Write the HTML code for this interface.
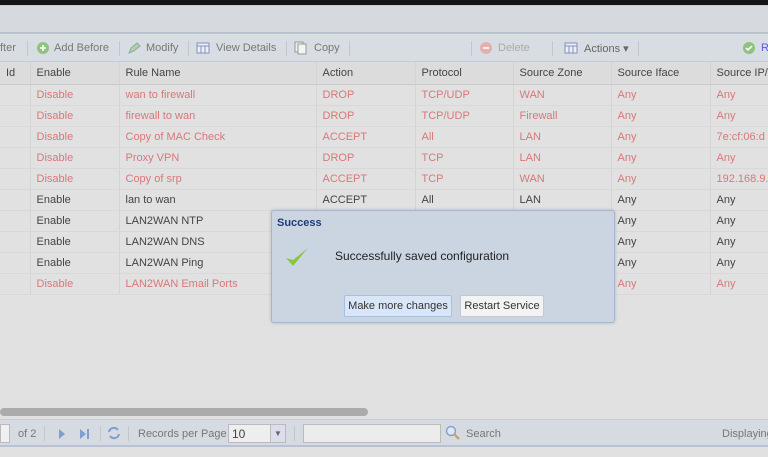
<!DOCTYPE html>
<html><head><meta charset="utf-8"><style>
*{box-sizing:border-box;margin:0;padding:0}
body{width:768px;height:457px;overflow:hidden;background:#e1e1e1;font-family:"Liberation Sans","DejaVu Sans",sans-serif;font-size:11px;color:#3a3a3a;position:relative}
.abs{position:absolute}
.top{left:0;top:0;width:768px;height:5px;background:#151515}
.band{left:0;top:5px;width:768px;height:29px;background:#d6d9de;border-top:1px solid #c8ccd3;border-bottom:2px solid #b9c2d4}
.tb{left:0;top:35px;width:768px;height:27px;background:#d8dde4;border-bottom:1px solid #c5cbd4}
.tb span{position:absolute;top:7px;color:#777}
.sep{position:absolute;top:6px;width:1px;height:15px;background:#c3c7cc}
.ic{position:absolute;top:6px;width:14px;height:14px}
table{position:absolute;left:0;top:62px;width:780px;border-collapse:collapse;table-layout:fixed}
td{height:21px;padding:0 6px;white-space:nowrap;overflow:hidden;border-bottom:1px solid #d8d8d8;border-right:1px solid #d4d4d4;color:#444}
tr.h td{height:22px;background:#dcdcdc;color:#444;border-bottom:1px solid #cacaca}
tr.r td{color:#d9777a}
.dlg{left:271px;top:210px;width:344px;height:113px;background:#cbd5e2;border:1px solid #a7b6cc;border-radius:3px;box-shadow:0 0 3px rgba(0,0,0,.2)}
.btn{position:absolute;top:84px;height:22px;border:1px solid #c3c9d2;border-radius:2px;font-size:11px;color:#333;text-align:center;line-height:20px}
.pb{left:0;top:419px;width:768px;height:28px;background:#d6dbe2;border-top:1px solid #c6ccd6;border-bottom:2px solid #b9c2d4}
.pb span{position:absolute;top:8px;color:#777}
</style></head><body>
<div class="abs top"></div>
<div class="abs band"></div>
<div class="abs tb">
<span style="left:0">fter</span>
<div class="sep" style="left:27px"></div>
<svg class="ic" style="left:36px" viewBox="0 0 14 14"><circle cx="7" cy="7" r="6" fill="#8fc27e"/><path d="M7 4v6M4 7h6" stroke="#fff" stroke-width="1.6"/></svg>
<span style="left:54px">Add Before</span>
<div class="sep" style="left:119px"></div>
<svg class="ic" style="left:127px" viewBox="0 0 14 14"><path d="M2 12l2-5 6-5 3 3-6 5z" fill="#b7cf9e" stroke="#8aa"/></svg>
<span style="left:146px">Modify</span>
<div class="sep" style="left:188px"></div>
<svg class="ic" style="left:196px" viewBox="0 0 14 14"><rect x="1" y="2" width="12" height="10" fill="#eef" stroke="#7f93b0"/><path d="M1 5h12M5 5v7M9 5v7" stroke="#7f93b0"/></svg>
<span style="left:216px">View Details</span>
<div class="sep" style="left:286px"></div>
<svg class="ic" style="left:294px" viewBox="0 0 14 14"><rect x="1" y="1" width="8" height="10" fill="#eee" stroke="#999"/><rect x="4" y="3" width="8" height="10" fill="#f4f4f4" stroke="#999"/></svg>
<span style="left:314px">Copy</span>
<div class="sep" style="left:349px"></div>
<div class="sep" style="left:471px"></div>
<svg class="ic" style="left:479px" viewBox="0 0 14 14"><circle cx="7" cy="7" r="6" fill="#e3b0b0"/><path d="M4 7h6" stroke="#fff" stroke-width="1.6"/></svg>
<span style="left:498px;color:#aaa">Delete</span>
<div class="sep" style="left:552px"></div>
<svg class="ic" style="left:564px" viewBox="0 0 14 14"><rect x="1" y="2" width="12" height="10" fill="#eef" stroke="#7f93b0"/><path d="M1 5h12M5 5v7M9 5v7" stroke="#7f93b0"/></svg>
<span style="left:584px;color:#666">Actions ▾</span>
<div class="sep" style="left:638px"></div>
<svg class="ic" style="left:742px" viewBox="0 0 14 14"><circle cx="7" cy="7" r="6" fill="#8fc27e"/><path d="M4 7l2 2 4-4" stroke="#fff" stroke-width="1.6" fill="none"/></svg>
<span style="left:761px;color:#5a5ae0">R</span>
</div>
<table>
<colgroup><col style="width:30px"><col style="width:89px"><col style="width:197px"><col style="width:99px"><col style="width:98px"><col style="width:98px"><col style="width:99px"><col style="width:70px"></colgroup>
<tr class="h"><td>Id</td><td>Enable</td><td>Rule Name</td><td>Action</td><td>Protocol</td><td>Source Zone</td><td>Source Iface</td><td>Source IP/</td></tr>
<tr class="r"><td></td><td>Disable</td><td>wan to firewall</td><td>DROP</td><td>TCP/UDP</td><td>WAN</td><td>Any</td><td>Any</td></tr>
<tr class="r"><td></td><td>Disable</td><td>firewall to wan</td><td>DROP</td><td>TCP/UDP</td><td>Firewall</td><td>Any</td><td>Any</td></tr>
<tr class="r"><td></td><td>Disable</td><td>Copy of MAC Check</td><td>ACCEPT</td><td>All</td><td>LAN</td><td>Any</td><td>7e:cf:06:d</td></tr>
<tr class="r"><td></td><td>Disable</td><td>Proxy VPN</td><td>DROP</td><td>TCP</td><td>LAN</td><td>Any</td><td>Any</td></tr>
<tr class="r"><td></td><td>Disable</td><td>Copy of srp</td><td>ACCEPT</td><td>TCP</td><td>WAN</td><td>Any</td><td>192.168.9.</td></tr>
<tr><td></td><td>Enable</td><td>lan to wan</td><td>ACCEPT</td><td>All</td><td>LAN</td><td>Any</td><td>Any</td></tr>
<tr><td></td><td>Enable</td><td>LAN2WAN NTP</td><td></td><td></td><td></td><td>Any</td><td>Any</td></tr>
<tr><td></td><td>Enable</td><td>LAN2WAN DNS</td><td></td><td></td><td></td><td>Any</td><td>Any</td></tr>
<tr><td></td><td>Enable</td><td>LAN2WAN Ping</td><td></td><td></td><td></td><td>Any</td><td>Any</td></tr>
<tr class="r"><td></td><td>Disable</td><td>LAN2WAN Email Ports</td><td></td><td></td><td></td><td>Any</td><td>Any</td></tr>
</table>
<div class="abs" style="left:0;top:408px;width:368px;height:8px;background:#ababab;border-radius:4px"></div>
<div class="abs pb">
<div class="abs" style="left:0;top:4px;width:10px;height:19px;background:#f0f0f0;border:1px solid #bbb"></div>
<span style="left:18px">of 2</span>
<div class="sep" style="left:44px"></div>
<svg class="ic" style="left:55px;top:7px" viewBox="0 0 14 14"><path d="M4 2l6 5-6 5z" fill="#7f9fd0"/></svg>
<svg class="ic" style="left:77px;top:7px" viewBox="0 0 14 14"><path d="M3 2l6 5-6 5z" fill="#7f9fd0"/><rect x="10" y="2" width="2" height="10" fill="#7f9fd0"/></svg>
<div class="sep" style="left:100px"></div>
<svg class="ic" style="left:107px;top:6px" viewBox="0 0 14 14"><path d="M2 6a5 5 0 0 1 9-2M12 8a5 5 0 0 1-9 2" stroke="#7f9fd0" stroke-width="2" fill="none"/></svg>
<div class="sep" style="left:128px"></div>
<span style="left:138px">Records per Page</span>
<div class="abs" style="left:228px;top:4px;width:58px;height:19px;background:#eee;border:1px solid #bbb"><span style="left:3px;top:2px;color:#444;font-size:12px">10</span><div class="abs" style="right:0;top:0;width:15px;height:17px;background:#dde;border-left:1px solid #bbb;text-align:center;font-size:8px;line-height:17px;color:#666">▼</div></div>
<div class="sep" style="left:294px"></div>
<div class="abs" style="left:303px;top:4px;width:138px;height:19px;background:#ececec;border:1px solid #bbb"></div>
<svg class="ic" style="left:445px;top:5px;width:16px;height:16px" viewBox="0 0 16 16"><circle cx="6" cy="6" r="4.5" fill="#dde8f5" stroke="#7f9fd0" stroke-width="1.4"/><path d="M9 9l5 5" stroke="#c8a060" stroke-width="2.2"/></svg>
<span style="left:466px">Search</span>
<span style="left:722px">Displaying</span>
</div>
<div class="abs dlg">
<div class="abs" style="left:5px;top:6px;font-weight:bold;color:#1f3a7a;font-size:11px">Success</div>
<svg class="abs" style="left:13px;top:35px" width="24" height="22" viewBox="0 0 24 22"><path d="M1 12l7 8L23 2 8 14z" fill="#8cc63f"/></svg>
<div class="abs" style="left:63px;top:38px;font-size:12px;color:#222">Successfully saved configuration</div>
<div class="btn" style="left:72px;width:108px;background:#d9e6f8;border-color:#a8bfe0">Make more changes</div>
<div class="btn" style="left:188px;width:84px;background:#f3f3f3">Restart Service</div>
</div>
</body></html>
